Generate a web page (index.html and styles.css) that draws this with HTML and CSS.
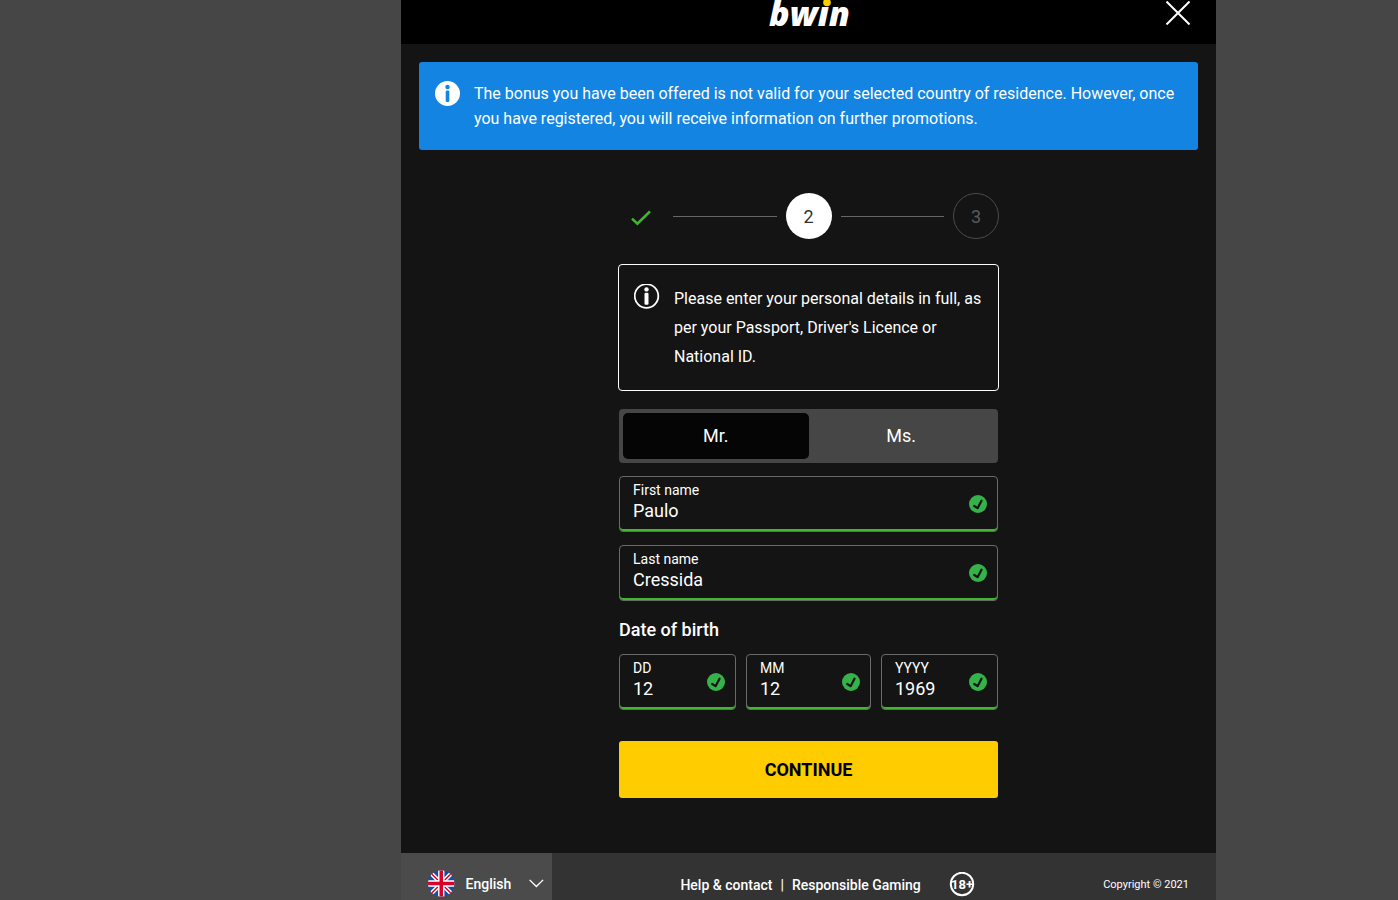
FILE: index.html
```html
<!DOCTYPE html>
<html lang="en">
<head>
  <meta charset="UTF-8">
  <meta name="viewport" content="width=device-width, initial-scale=1.0">
  <title>bwin - Registration</title>
  <link rel="stylesheet" href="styles.css">
</head>
<body>

  <!-- Shared icon -->
  <svg class="sprite" aria-hidden="true">
    <symbol id="valid" viewBox="0 0 18 18">
      <circle cx="9" cy="9" r="9" fill="#36b24a"/>
      <path d="M5.2 11 L8.6 13.2 L12.6 5.6" fill="none" stroke="#141414" stroke-width="2.2" stroke-linecap="round" stroke-linejoin="round"/>
    </symbol>
  </svg>

  <div class="panel">
    <header class="header">
      <svg class="logo" width="84" height="30" viewBox="0 0 84 30" role="img" aria-label="bwin">
        <text class="logo-text" x="2" y="26">bwin</text>
        <rect x="51" y="-4" width="14" height="11" fill="#000"/>
        <circle cx="60" cy="2.4" r="3.8" fill="#ffcc00"/>
      </svg>
      <button class="close" type="button" aria-label="Close">
        <svg width="24" height="24" viewBox="0 0 24 24"><path d="M0.5 0.5 L23.5 23.5 M23.5 0.5 L0.5 23.5" stroke="#fff" stroke-width="2"/></svg>
      </button>
    </header>

    <main class="content">
      <div class="banner">
        <svg class="info-icon" width="26" height="26" viewBox="0 0 26 26" aria-hidden="true">
          <circle cx="12.5" cy="12.5" r="12.5" fill="#fff"/>
          <circle cx="12.5" cy="6" r="2.2" fill="#1384e1"/>
          <rect x="10.7" y="9.6" width="3.6" height="11.4" rx="1.2" fill="#1384e1"/>
        </svg>
        <p>The bonus you have been offered is not valid for your selected country of residence. However, once you have registered, you will receive information on further promotions.</p>
      </div>

      <!-- Progress -->
      <div class="steps">
        <div class="step done">
          <svg width="20" height="16" viewBox="0 0 20 16" role="img" aria-label="Done"><path d="M1 8.6 L6.4 13.6 L19 1.4" fill="none" stroke="#3fb82f" stroke-width="2.6"/></svg>
        </div>
        <span class="line"></span>
        <div class="step active">2</div>
        <span class="line"></span>
        <div class="step next">3</div>
      </div>

      <div class="notice">
        <svg class="info-icon" width="26" height="26" viewBox="0 0 26 26" aria-hidden="true">
          <circle cx="12.5" cy="12" r="11.8" fill="none" stroke="#fff" stroke-width="1.8"/>
          <circle cx="12.5" cy="5.4" r="2.2" fill="#fff"/>
          <rect x="10.5" y="8.8" width="4" height="12" rx="1.2" fill="#fff"/>
        </svg>
        <p>Please enter your personal details in full, as per your Passport, Driver's Licence or National ID.</p>
      </div>

      <form class="form">
        <div class="titles">
          <label><input type="radio" name="title" value="mr" checked><span>Mr.</span></label>
          <label><input type="radio" name="title" value="ms"><span>Ms.</span></label>
        </div>

        <div class="field">
          <label for="firstName">First name</label>
          <input type="text" id="firstName" value="Paulo">
          <svg class="valid"><use href="#valid"/></svg>
        </div>
        <div class="field">
          <label for="lastName">Last name</label>
          <input type="text" id="lastName" value="Cressida">
          <svg class="valid"><use href="#valid"/></svg>
        </div>

        <h2>Date of birth</h2>
        <div class="dates">
          <div class="field">
            <label for="day">DD</label>
            <input type="text" id="day" value="12">
            <svg class="valid"><use href="#valid"/></svg>
          </div>
          <div class="field">
            <label for="month">MM</label>
            <input type="text" id="month" value="12">
            <svg class="valid"><use href="#valid"/></svg>
          </div>
          <div class="field">
            <label for="year">YYYY</label>
            <input type="text" id="year" value="1969">
            <svg class="valid"><use href="#valid"/></svg>
          </div>
        </div>

        <button class="continue" type="submit">CONTINUE</button>
      </form>
    </main>

    <footer class="footer">
      <button class="language" type="button">
        <svg width="27" height="27" viewBox="0 0 27 27" aria-hidden="true">
          <clipPath id="round"><circle cx="13.5" cy="13.5" r="13.5"/></clipPath>
          <g clip-path="url(#round)">
            <rect width="27" height="27" fill="#1250a8"/>
            <path d="M0 0 L27 27 M27 0 L0 27" stroke="#fff" stroke-width="4.4"/>
            <path d="M0 0 L27 27 M27 0 L0 27" stroke="#d80027" stroke-width="1.4"/>
            <path d="M13.5 0 V27 M0 13.5 H27" stroke="#fff" stroke-width="6.4"/>
            <path d="M13.5 0 V27 M0 13.5 H27" stroke="#d80027" stroke-width="3.6"/>
          </g>
        </svg>
        <span>English</span>
        <svg width="15" height="9" viewBox="0 0 15 9" aria-hidden="true"><path d="M0.6 0.8 L7.5 7.6 L14.4 0.8" fill="none" stroke="#fff" stroke-width="1.4"/></svg>
      </button>
      <nav class="links">
        <a href="#">Help &amp; contact</a>
        <span>|</span>
        <a href="#">Responsible Gaming</a>
        <svg width="26" height="26" viewBox="0 0 26 26" role="img" aria-label="18+">
          <circle cx="13" cy="12" r="11.2" fill="none" stroke="#fff" stroke-width="2"/>
          <text class="age" x="13" y="17" text-anchor="middle">18+</text>
        </svg>
      </nav>
      <p class="copyright">Copyright © 2021</p>
    </footer>
  </div>

</body>
</html>
```
FILE: styles.css
```css
* {
  margin: 0;
  padding: 0;
  box-sizing: border-box;
}

body {
  display: grid;
  grid-template-columns: 401px 1fr 182px;
  min-height: 100vh;
  background-color: #464646;
  color: #fff;
  font-family: Roboto, Arial, sans-serif;
  font-size: 16px;
}

button,
input {
  border: none;
  background: none;
  color: inherit;
  font-family: inherit;
}

button {
  cursor: pointer;
}

.sprite {
  position: absolute;
  width: 0;
  height: 0;
}

.panel {
  grid-column: 2;
  display: flex;
  flex-direction: column;
  background-color: #141414;
}

/* Header */
.header {
  display: grid;
  grid-template-columns: 1fr auto 1fr;
  align-items: start;
  height: 44px;
  padding: 0 26px;
  background-color: #000;
}

.logo {
  grid-column: 2;
  overflow: visible;
}

.logo-text {
  font-family: "Open Sans", sans-serif;
  font-size: 34px;
  font-weight: 800;
  font-style: italic;
  fill: #fff;
}

.close {
  justify-self: end;
  height: 26px;
}

.close svg {
  display: block;
}

/* Content */
.content {
  flex: 1;
  padding: 18px 18px 55px;
}

.banner {
  display: flex;
  gap: 13px;
  padding: 19px 16px;
  border-radius: 3px;
  background-color: #1384e1;
  line-height: 25px;
}

.info-icon {
  flex: none;
}

.steps {
  display: flex;
  align-items: center;
  gap: 9px;
  max-width: 381px;
  margin: 43px auto 25px;
}

.step {
  display: flex;
  align-items: center;
  justify-content: center;
  width: 46px;
  height: 46px;
  border-radius: 50%;
  font-size: 18px;
}

.step.done {
  padding-top: 3px;
}

.step.active {
  background-color: #fff;
  color: #333;
}

.step.next {
  border: 1px solid #4b4b4b;
  color: #5a5a5a;
}

.line {
  flex: 1;
  height: 1px;
  background-color: #666;
}

.notice {
  display: flex;
  gap: 14px;
  max-width: 381px;
  margin: 0 auto 18px;
  padding: 19px 15px;
  border: 1px solid #fff;
  border-radius: 4px;
  line-height: 29px;
}

/* Form */
.form {
  max-width: 379px;
  margin: 0 auto;
}

.titles {
  display: flex;
  margin-bottom: 13px;
  padding: 4px;
  border-radius: 4px;
  background-color: #464646;
}

.titles label {
  flex: 1;
  cursor: pointer;
}

.titles input {
  position: absolute;
  opacity: 0;
}

.titles span {
  display: block;
  border-radius: 5px;
  font-size: 18px;
  line-height: 46px;
  text-align: center;
}

.titles input:checked + span {
  background-color: #050505;
}

.field {
  display: grid;
  grid-template-columns: 1fr 18px;
  grid-template-rows: 17px 27px;
  height: 56px;
  margin-bottom: 13px;
  padding: 5px 10px 0 13px;
  border: 1px solid #6a6a6a;
  border-radius: 4px;
  box-shadow: inset 0 -2px #3fb82f;
}

.field label {
  font-size: 14px;
  line-height: 16px;
}

.field input {
  grid-row: 2;
  align-self: start;
  width: 100%;
  min-width: 0;
  height: 22px;
  font-size: 18px;
  outline: none;
}

.valid {
  grid-column: 2;
  grid-row: 1 / 3;
  align-self: center;
  width: 18px;
  height: 18px;
}

h2 {
  margin: 18px 0 13px;
  font-size: 18px;
  font-weight: 500;
  line-height: 22px;
}

.dates {
  display: grid;
  grid-template-columns: 117fr 125fr 117fr;
  gap: 10px;
}

.continue {
  width: 100%;
  height: 57px;
  margin-top: 18px;
  border-radius: 3px;
  background-color: #ffcc00;
  color: #000;
  font-size: 18px;
  font-weight: 700;
}

/* Footer */
.footer {
  display: flex;
  align-items: stretch;
  justify-content: space-between;
  height: 47px;
  padding-right: 27px;
  background-color: #333;
}

.language {
  display: flex;
  align-items: center;
  gap: 11px;
  width: 151px;
  padding: 14px 8px 0 27px;
  background-color: #4b4b4b;
  font-size: 14px;
  font-weight: 500;
}

.language svg:last-child {
  margin-left: 7px;
}

.links {
  display: flex;
  align-items: center;
  gap: 8px;
  padding-top: 16px;
  font-size: 14px;
  font-weight: 500;
}

.links a {
  color: #fff;
  text-decoration: none;
}

.links svg {
  margin-left: 20px;
}

.age {
  font-size: 13px;
  font-weight: 700;
  fill: #fff;
}

.copyright {
  padding-top: 25px;
  font-size: 11px;
  line-height: 14px;
}
```
